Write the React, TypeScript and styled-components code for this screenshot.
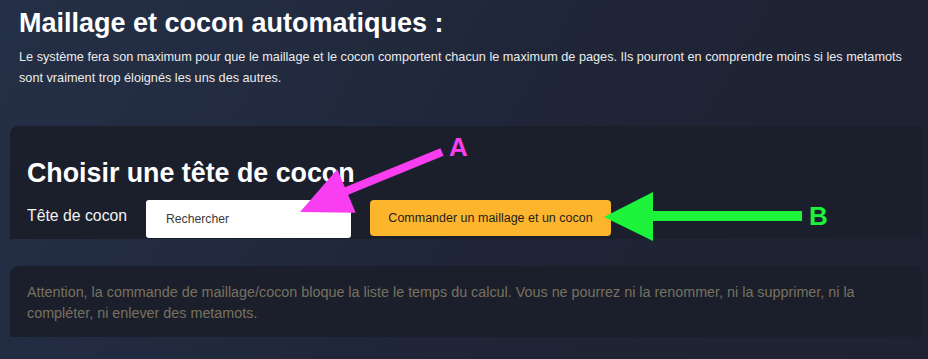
import styled, { createGlobalStyle } from 'styled-components'

const GlobalStyle = createGlobalStyle`
  html, body {
    margin: 0;
    padding: 0;
  }
  body {
    font-family: 'Liberation Sans', Arial, sans-serif;
    background: linear-gradient(120deg, #243047 0%, #1f2436 60%, #1e2232 100%);
    min-height: 359px;
    overflow: hidden;
  }
`

const Page = styled.div`
  position: relative;
  width: 928px;
  height: 359px;
`

const Intro = styled.header`
  padding: 7px 19px 0 19px;
`

const Title = styled.h1`
  margin: 0;
  font-size: 27px;
  line-height: 32px;
  font-weight: 700;
  color: #ffffff;
`

const Lead = styled.p`
  margin: 8px 0 0 0;
  font-size: 12.7px;
  line-height: 21px;
  color: #ececec;
`

const Card = styled.section<{ $top: number }>`
  margin: ${(p) => p.$top}px 6px 0 10px;
  background: #1b1f2c;
  border-radius: 8px 8px 0 0;
`

const ChooserCard = styled(Card)`
  padding: 32px 17px 1px 17px;
`

const NoticeCard = styled(Card)`
  padding: 16px 27px 13px 17px;
`

const CardTitle = styled.h2`
  margin: 0;
  font-size: 26.8px;
  line-height: 30px;
  font-weight: 700;
  color: #ffffff;
`

const FormRow = styled.div`
  display: flex;
  align-items: flex-start;
  margin-top: 12px;
`

const Label = styled.label`
  width: 119px;
  font-size: 15.8px;
  line-height: 18px;
  padding-top: 7px;
  color: #f2f2f2;
`

const SearchInput = styled.input`
  box-sizing: border-box;
  width: 205px;
  height: 38px;
  border: none;
  border-radius: 3px;
  background: #ffffff;
  padding: 0 20px;
  font-family: 'Liberation Sans', Arial, sans-serif;
  font-size: 12.2px;
  color: #333;
  outline: none;
  &::placeholder {
    color: #3a3a3a;
  }
`

const OrderButton = styled.button`
  box-sizing: border-box;
  margin-left: 19px;
  width: 241px;
  height: 36px;
  border: none;
  border-radius: 4px;
  background: #fdb52d;
  color: #1e1e1e;
  font-family: 'Liberation Sans', Arial, sans-serif;
  font-size: 12.5px;
`

const Notice = styled.p`
  margin: 0;
  font-size: 14.35px;
  line-height: 21px;
  color: #78715f;
`

const Overlay = styled.svg`
  position: absolute;
  left: 0;
  top: 0;
  pointer-events: none;
`

const Marker = styled.span<{ $color: string; $x: number; $y: number }>`
  position: absolute;
  left: ${(p) => p.$x}px;
  top: ${(p) => p.$y}px;
  font-size: 26px;
  line-height: 30px;
  font-weight: 700;
  color: ${(p) => p.$color};
`

const App = () => {
  return (
    <Page>
      <GlobalStyle />
      <Intro>
        <Title>Maillage et cocon automatiques :</Title>
        <Lead>
          Le système fera son maximum pour que le maillage et le cocon comportent chacun le
          maximum de pages. Ils pourront en comprendre moins si les metamots sont vraiment trop
          éloignés les uns des autres.
        </Lead>
      </Intro>
      <ChooserCard $top={37}>
        <CardTitle>Choisir une tête de cocon</CardTitle>
        <FormRow>
          <Label>Tête de cocon</Label>
          <SearchInput placeholder="Rechercher" />
          <OrderButton>Commander un maillage et un cocon</OrderButton>
        </FormRow>
      </ChooserCard>
      <NoticeCard $top={27}>
        <Notice>
          Attention, la commande de maillage/cocon bloque la liste le temps du calcul. Vous ne
          pourrez ni la renommer, ni la supprimer, ni la compléter, ni enlever des metamots.
        </Notice>
      </NoticeCard>
      <Overlay width="928" height="359" viewBox="0 0 928 359">
        <polygon
          fill="#f83ef0"
          points="440.4,148.3 344.9,187.3 337.3,169.3 300,212 355.7,212.7 348.1,194.7 443.6,155.7"
        />
        <polygon
          fill="#1cf33a"
          points="802,211 653,211 653,192 604,217 653,241 653,221 802,221"
        />
      </Overlay>
      <Marker $color="#f83ef0" $x={449} $y={132}>A</Marker>
      <Marker $color="#1cf33a" $x={809} $y={201}>B</Marker>
    </Page>
  )
}

export default App
